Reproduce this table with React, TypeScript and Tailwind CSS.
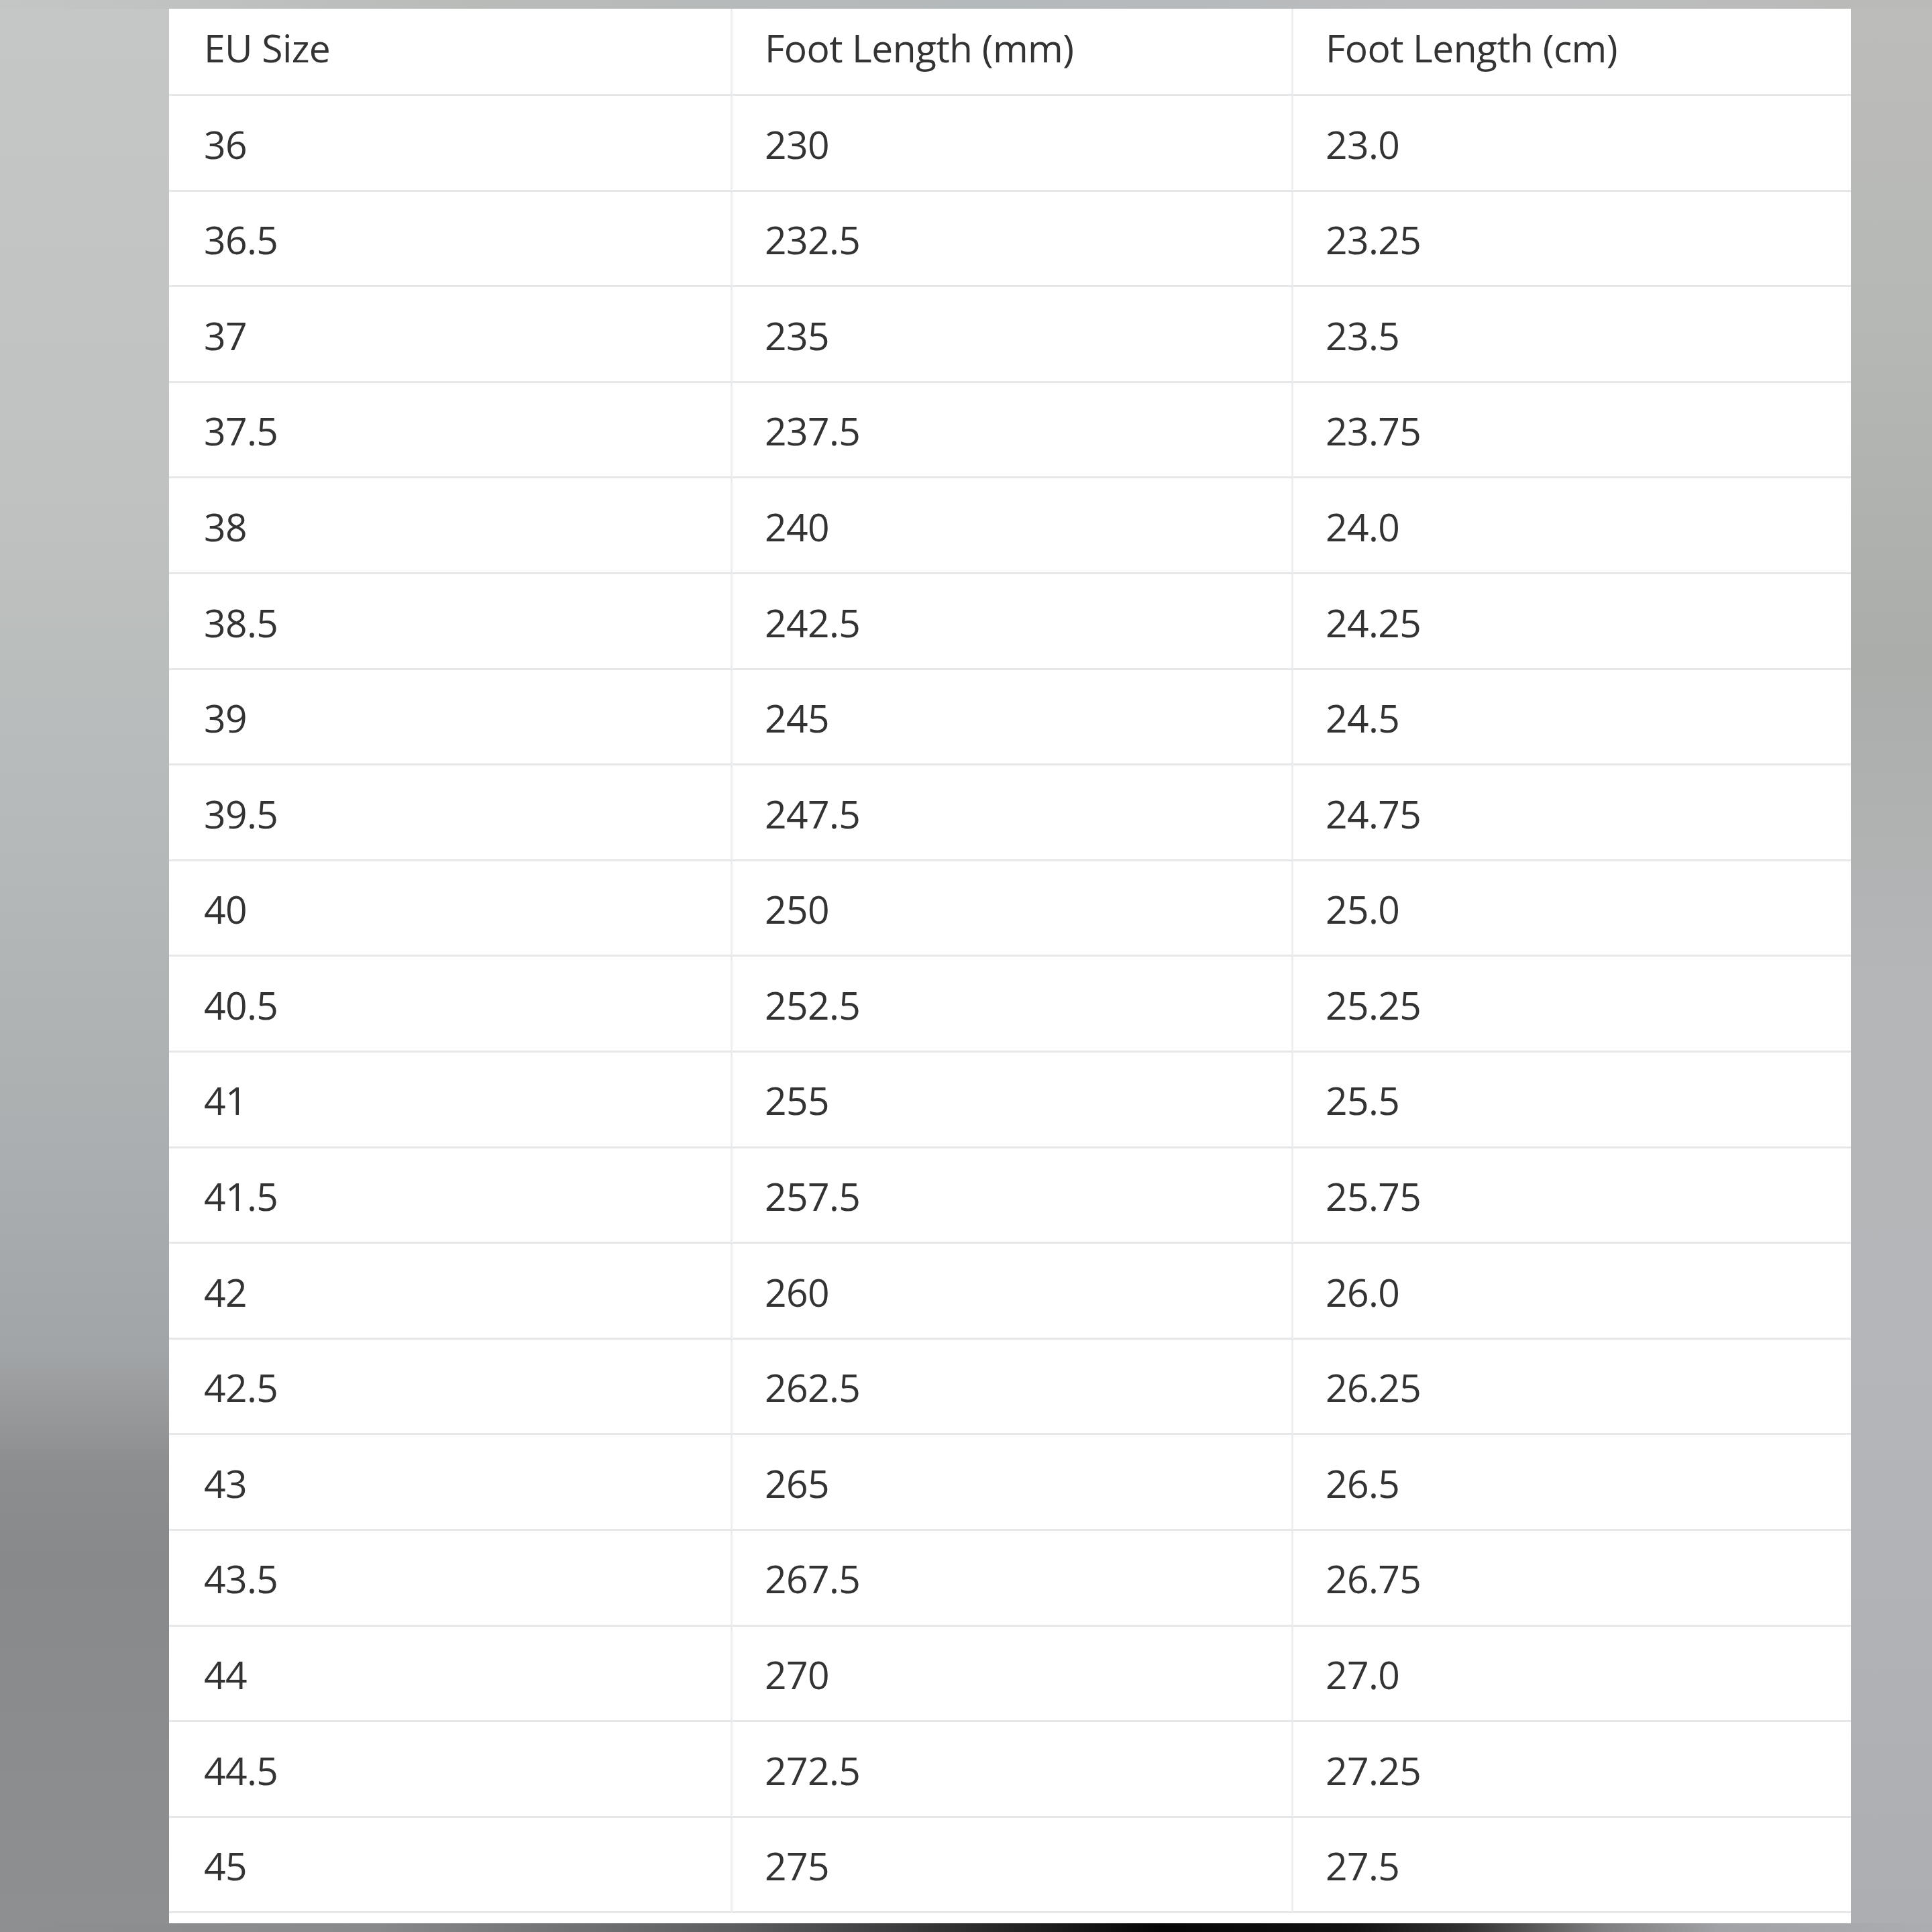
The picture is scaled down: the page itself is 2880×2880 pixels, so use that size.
const rows: [string, string, string][] = [
  ["36", "230", "23.0"],
  ["36.5", "232.5", "23.25"],
  ["37", "235", "23.5"],
  ["37.5", "237.5", "23.75"],
  ["38", "240", "24.0"],
  ["38.5", "242.5", "24.25"],
  ["39", "245", "24.5"],
  ["39.5", "247.5", "24.75"],
  ["40", "250", "25.0"],
  ["40.5", "252.5", "25.25"],
  ["41", "255", "25.5"],
  ["41.5", "257.5", "25.75"],
  ["42", "260", "26.0"],
  ["42.5", "262.5", "26.25"],
  ["43", "265", "26.5"],
  ["43.5", "267.5", "26.75"],
  ["44", "270", "27.0"],
  ["44.5", "272.5", "27.25"],
  ["45", "275", "27.5"],
];

const header: [string, string, string] = ["EU Size", "Foot Length (mm)", "Foot Length (cm)"];

function Row({ cells, head }: { cells: [string, string, string]; head?: boolean }) {
  return (
    <>
      {cells.map((text, i) => (
        <div
          key={i}
          className={`flex items-center border-b-[3px] border-[#e5e7e9] ${
            head ? "h-[130px] pb-[9px]" : "h-[142.6px] pt-[5px]"
          } ${i < 2 ? "border-r-[3px] border-r-[#eceef0]" : ""} ${i === 0 ? "pl-[52px]" : "pl-[48px]"}`}
        >
          {text}
        </div>
      ))}
    </>
  );
}

export default function App() {
  return (
    <div className="flex h-[2880px] w-[2880px] flex-col bg-[linear-gradient(90deg,#c3c6c5,#b9bbb9_25%,#b4b9bb_51%,#bbbcbe_76%,#babbb8)]">
      <div className="h-[13px]" />
      <div className="flex h-[2854px]">
        {/* left backdrop */}
        <div className="w-[252px] bg-[linear-gradient(180deg,#c4c7c6_0%,#bfc2c1_25%,#b4b8b8_45%,#abaeb0_60%,#a2a5a7_70%,#8d8e90_76%,#88898b_81%,#8e8f91_100%)]" />

        {/* size table */}
        <div className="w-[2507px] bg-white font-['Open_Sans',sans-serif] text-[57px] tracking-[-0.6px] text-[#333333]">
          <div className="grid grid-cols-[840px_836px_1fr]">
            <Row cells={header} head />
            {rows.map((r) => (
              <Row cells={r} key={r[0]} />
            ))}
          </div>
        </div>

        {/* right backdrop */}
        <div className="flex-1 bg-[linear-gradient(180deg,#bcbdbb_0%,#b6b8b6_16%,#abadab_34%,#b5b6b8_51%,#b5b6b9_70%,#adaeb2_100%)]" />
      </div>
      <div className="h-[13px] bg-[linear-gradient(90deg,#8e8f91_0%,#888a8c_19%,#5d5e60_38%,#2a2a2b_51%,#060606_60%,#121212_70%,#333333_76%,#7f7f81_83%,#a1a2a5_89%,#acadb1_100%)]" />
    </div>
  );
}
